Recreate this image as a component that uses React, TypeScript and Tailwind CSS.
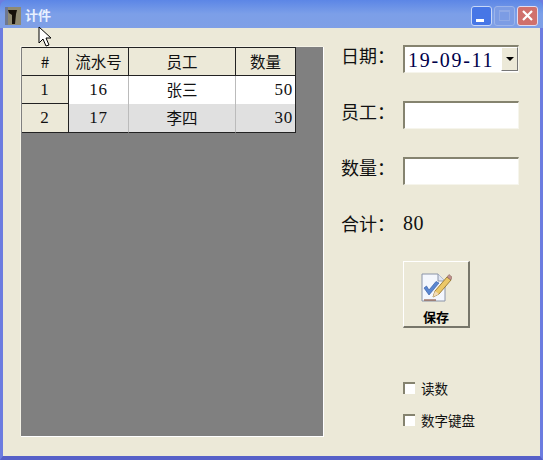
import * as React from "react";

const rows = [
    { no: "1", id: "16", name: "张三", qty: "50", bg: "bg-white" },
    { no: "2", id: "17", name: "李四", qty: "30", bg: "bg-[#e0e0e0]" },
];

const cjk = "font-['Noto_Sans_CJK_SC',sans-serif]";
const num = "font-['Liberation_Serif',serif] text-[17px] tracking-[0.8px]";

const Field: React.FC<{ label: string; className: string; labelClass?: string; children: React.ReactNode }> = ({
    label,
    className,
    labelClass = "-mt-[8px]",
    children,
}) => (
    <div className={`flex items-center ${className}`}>
        <span className={`w-[62px] text-[18px] leading-[28px] text-[#111] whitespace-nowrap ${cjk} ${labelClass}`}>{label}</span>
        {children}
    </div>
);

const SaveIcon = () => (
    <svg width="32" height="32" viewBox="0 0 32 32">
        <path d="M2 2H18L25 9V29H2Z" fill="#f4f7fd" stroke="#8a94a8" />
        <path d="M18 2V9H25" fill="#dfe5f2" stroke="#8a94a8" />
        <path d="M4 16L9 23L19 11L16 9.5L9 18L6.5 14Z" fill="#5a86d0" stroke="#2c55a0" strokeWidth="0.6" />
        <path d="M13 25L15 19L27 5L31 8L19 22Z" fill="#ecc868" stroke="#8c6a20" strokeWidth="0.8" />
        <path d="M27 5L29 2.5L32 5L31 8Z" fill="#c09090" stroke="#806050" strokeWidth="0.5" />
        <path d="M13 25L15 19L19 22Z" fill="#f3dcb8" />
        <path d="M4 28H16" stroke="#7a3a20" strokeWidth="1" />
    </svg>
);

const AppIcon = () => (
    <svg width="16" height="18" viewBox="0 0 16 18">
        <rect width="16" height="18" fill="#8f8a72" />
        <path d="M3 3H12L11 7L10 17H7L7 8L4 6Z" fill="#15100a" />
        <path d="M0 0H3V18H0Z" fill="#6f7890" />
    </svg>
);

const App: React.FC = () => {
    return (
        <div className={`relative flex h-[460px] w-[543px] flex-col overflow-hidden bg-[#6c7ce0] ${cjk}`}>
            {/* title bar */}
            <div className="flex h-[28px] shrink-0 items-center rounded-t-[7px] bg-gradient-to-b from-[#5c86e6] via-[#7c9fe8] to-[#7f9fe6] pl-[5px] pr-[5px] pt-[3px]">
                <AppIcon />
                <span className="-mt-[2px] ml-[4px] text-[13px] font-bold text-[#e8f0ff]">计件</span>
                <div className="ml-auto flex gap-[2px]">
                    <div className="relative h-[20px] w-[21px] rounded-[3px] border border-[#c8d8f8] bg-[#4676e6]">
                        <div className="absolute bottom-[3px] left-[4px] h-[3px] w-[8px] bg-white" />
                    </div>
                    <div className="flex h-[20px] w-[21px] items-center justify-center rounded-[3px] border border-[#9cb4ea] bg-[#7c9ce4]">
                        <div className="h-[11px] w-[11px] border border-t-2 border-[#90aae6]" />
                    </div>
                    <div className="flex h-[20px] w-[21px] items-center justify-center rounded-[3px] border border-[#e0dcf0] bg-[#d0706c]">
                        <svg width="13" height="13" viewBox="0 0 13 13">
                            <path d="M2 2L11 11M11 2L2 11" stroke="white" strokeWidth="2.2" />
                        </svg>
                    </div>
                </div>
            </div>

            {/* window body */}
            <div className="flex min-h-0 flex-1 border-x-[3px] border-b-[4px] border-x-[#6c7ce0] border-b-[#5660c8] bg-[#ece9d8] pl-[18px] pt-[19px]">
                {/* grid */}
                <div className="h-[390px] w-[303px] shrink-0 border-b border-r border-b-white border-r-white bg-[#808080] pl-[1px] [box-shadow:-1px_-1px_0_#f4f2e6]">
                    <div className="grid w-[274px] grid-cols-[47px_60px_107px_60px] border-t border-[#222] text-[15.5px] leading-[27px] text-[#111]">
                        <div className="border-b border-r border-[#222] bg-[#ece9d8] text-center">#</div>
                        <div className="border-b border-r border-[#222] bg-[#ece9d8] text-center">流水号</div>
                        <div className="border-b border-r border-[#222] bg-[#ece9d8] text-center">员工</div>
                        <div className="border-b border-r border-[#222] bg-[#ece9d8] text-center">数量</div>
                        {rows.map((r, i) => (
                            <React.Fragment key={r.no}>
                                <div className={`border-b border-r border-[#222] bg-[#ece9d8] text-center ${num}`}>{r.no}</div>
                                <div className={`border-r border-r-[#bbb] pb-[1px] text-center ${num} ${r.bg} ${i === 1 ? "border-b border-b-[#222]" : ""}`}>{r.id}</div>
                                <div className={`border-r border-r-[#bbb] pb-[1px] text-center ${r.bg} ${i === 1 ? "border-b border-b-[#222]" : ""}`}>{r.name}</div>
                                <div className={`border-r border-r-[#222] pb-[1px] pr-[2px] text-right ${num} ${r.bg} ${i === 1 ? "border-b border-b-[#222]" : ""}`}>{r.qty}</div>
                            </React.Fragment>
                        ))}
                    </div>
                </div>

                {/* form */}
                <div className="ml-[17px] flex flex-col">
                    <Field label="日期：" className="-mt-[2px]">
                        <div className="flex h-[28px] w-[116px] border-b border-l-2 border-r border-t-2 border-b-[#f6f5ec] border-l-[#85836f] border-r-[#f6f5ec] border-t-[#85836f] bg-white">
                            <span className="flex-1 whitespace-nowrap pl-[3px] font-['Liberation_Serif',serif] text-[20px] leading-[26px] tracking-[1.7px] text-[#00004a]">19-09-11</span>
                            <div className="mb-[1px] flex w-[17px] shrink-0 items-center justify-center border border-b-[#777] border-r-[#777] border-l-white border-t-white bg-[#ece9d8]">
                                <div className="h-0 w-0 border-x-[4px] border-t-[4px] border-x-transparent border-t-black" />
                            </div>
                        </div>
                    </Field>
                    <Field label="员工：" className="mt-[28px]">
                        <div className="h-[28px] w-[116px] border-b border-l-2 border-r border-t-2 border-b-[#f6f5ec] border-l-[#85836f] border-r-[#f6f5ec] border-t-[#85836f] bg-white" />
                    </Field>
                    <Field label="数量：" className="mt-[28px]">
                        <div className="h-[28px] w-[116px] border-b border-l-2 border-r border-t-2 border-b-[#f6f5ec] border-l-[#85836f] border-r-[#f6f5ec] border-t-[#85836f] bg-white" />
                    </Field>
                    <Field label="合计：" className="mt-[24px]" labelClass="">
                        <span className="font-['Liberation_Serif',serif] text-[20px] leading-[28px] tracking-[0.5px] text-[#111]">80</span>
                    </Field>

                    <button
                        type="button"
                        className="ml-[62px] mt-[24px] flex h-[67px] w-[67px] flex-col items-center border border-b-2 border-r-2 border-b-[#77766a] border-l-white border-r-[#77766a] border-t-white bg-[#ece9d8] pt-[10px]"
                    >
                        <SaveIcon />
                        <span className="mt-[5px] text-[13px] font-bold leading-[16px] text-black">保存</span>
                    </button>

                    <label className="ml-[62px] mt-[51px] flex items-center text-[13.5px] leading-[18px] text-[#111]">
                        <span className="h-[12px] w-[12px] border-l-2 border-t-2 border-l-[#85836f] border-t-[#85836f] bg-white" />
                        <span className="ml-[6px]">读数</span>
                    </label>
                    <label className="ml-[62px] mt-[14px] flex items-center text-[13.5px] leading-[18px] text-[#111]">
                        <span className="h-[12px] w-[12px] border-l-2 border-t-2 border-l-[#85836f] border-t-[#85836f] bg-white" />
                        <span className="ml-[6px]">数字键盘</span>
                    </label>
                </div>
            </div>

            {/* mouse pointer over the window */}
            <svg className="absolute left-[38px] top-[26px]" width="14" height="22" viewBox="0 0 14 22">
                <path d="M1 1V17L5 13L8 20L11 19L8 12H13Z" fill="white" stroke="black" strokeWidth="1" />
            </svg>
        </div>
    );
};

export default App;
